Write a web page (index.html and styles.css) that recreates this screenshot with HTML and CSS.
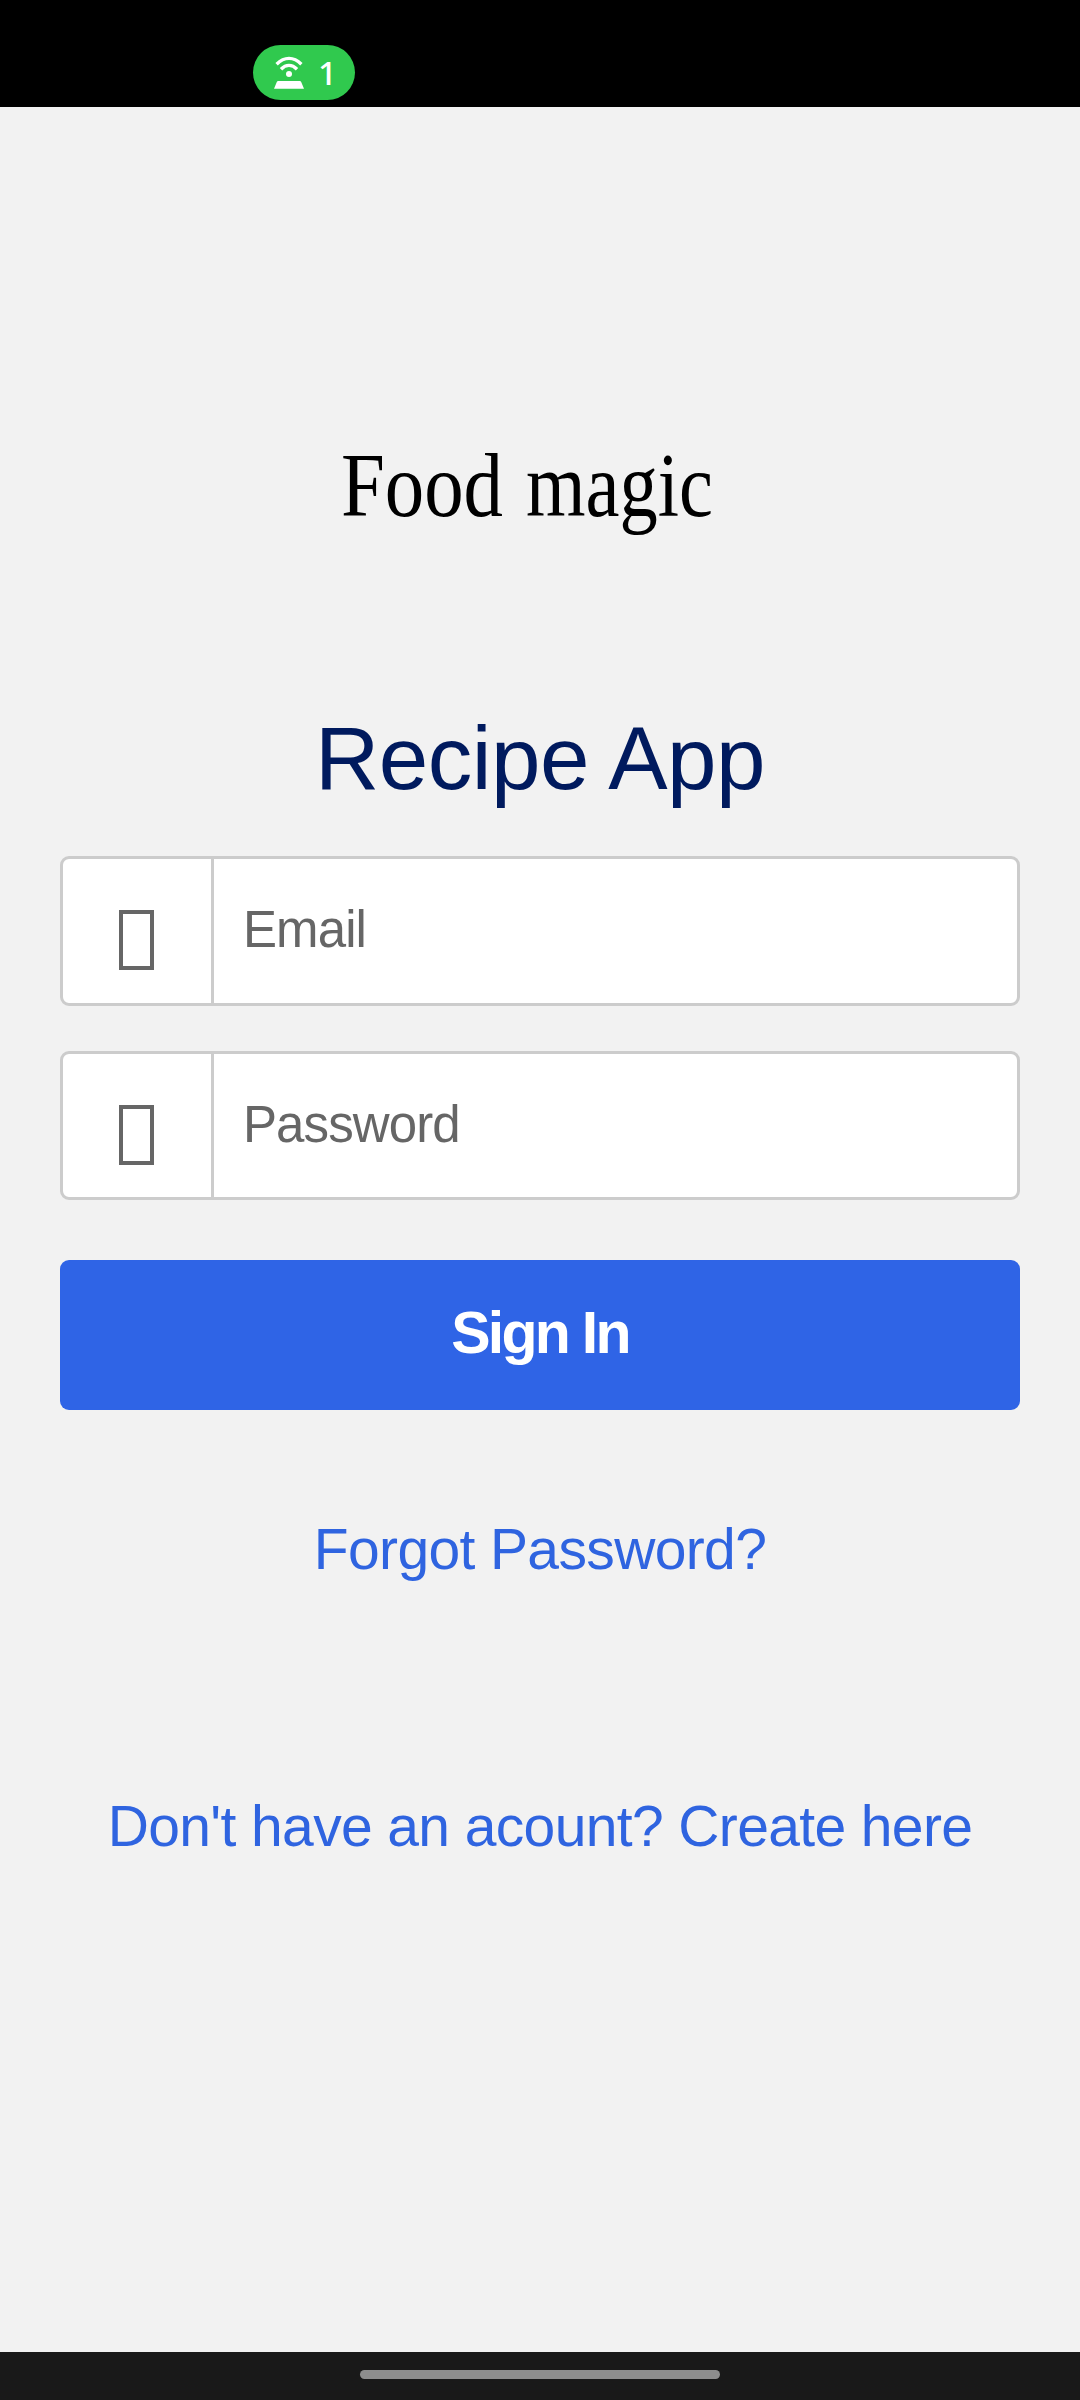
FILE: index.html
```html
<!DOCTYPE html>
<html lang="en">
<head>
<meta charset="utf-8">
<title>Recipe App</title>
<link rel="stylesheet" href="styles.css">
</head>
<body>
<header class="status-bar">
  <div class="pill">
    <svg class="hotspot" width="30" height="33" viewBox="0 0 30 33" fill="none" stroke="#fff" stroke-width="3.4">
      <path d="M2.6 8.2Q8.5 2.4 15 2.4T27.4 8.2"/>
      <path d="M7 13.2Q10.7 9.4 15 9.4T23 13.2"/>
      <circle cx="15" cy="18" r="3" fill="#fff" stroke="none"/>
      <path d="M4.2 25H25.8Q26.8 25 27.2 26L30 32.7H0L2.8 26Q3.2 25 4.2 25Z" fill="#fff" stroke="none"/>
    </svg>
    <span class="count">1</span>
  </div>
</header>
<main class="screen">
  <svg class="logo" width="400" height="140" viewBox="0 0 400 140" role="img" aria-label="Food magic">
    <text x="11" y="86" textLength="162" lengthAdjust="spacingAndGlyphs">Food</text>
    <text x="196" y="86" textLength="187" lengthAdjust="spacingAndGlyphs">magic</text>
  </svg>
  <h1 class="title">Recipe App</h1>
  <form class="form">
    <label class="field"><span class="field-icon"><i class="glyph"></i></span><span class="placeholder">Email</span></label>
    <label class="field"><span class="field-icon"><i class="glyph"></i></span><span class="placeholder">Password</span></label>
    <button class="submit" type="button">Sign In</button>
  </form>
  <a class="link forgot">Forgot Password?</a>
  <a class="link create">Don't have an acount? Create here</a>
</main>
<footer class="nav-bar"><div class="handle"></div></footer>
</body>
</html>
```
FILE: styles.css
```css
* { box-sizing: border-box; }
body {
  margin: 0;
  height: 2400px;
  display: flex;
  flex-direction: column;
  background: #f2f2f2;
  font-family: "Liberation Sans", Arial, sans-serif;
}
.status-bar {
  height: 107px;
  padding: 45px 0 0 253px;
  background: #000;
}
.pill {
  width: 102px;
  height: 55px;
  border-radius: 28px;
  background: #30c94e;
  display: flex;
  align-items: center;
  padding-left: 21px;
  gap: 14px;
}
.count {
  color: #fff;
  font: 500 33px/55px "Noto Sans", sans-serif;
}
.screen {
  flex: 1;
  display: flex;
  flex-direction: column;
  align-items: center;
}
.logo {
  display: block;
  align-self: flex-start;
  margin: 323px 0 0 330px;
  overflow: visible;
  font-family: "Liberation Serif", serif;
  font-size: 91px;
}
.title {
  margin: 133px 0 0;
  color: #001a5e;
  font-size: 89px;
  font-weight: 400;
  line-height: 110px;
  letter-spacing: -0.5px;
  white-space: nowrap;
}
.form {
  width: 960px;
  margin-top: 43px;
  display: flex;
  flex-direction: column;
}
.field {
  height: 150px;
  margin-bottom: 45px;
  display: flex;
  border: 3px solid #ccc;
  border-radius: 9px;
  background: #fff;
}
.field + .field { height: 149px; margin-bottom: 60px; }
.field-icon {
  width: 151px;
  border-right: 3px solid #ccc;
  padding: 51px 0 0 56px;
}
.glyph {
  display: block;
  width: 35px;
  height: 60px;
  border: 4px solid #666;
}
.placeholder {
  padding-left: 29px;
  color: #666;
  font-size: 51px;
  line-height: 141px;
  letter-spacing: -0.9px;
}
.submit {
  height: 150px;
  padding: 0 0 3px;
  border: 0;
  border-radius: 9px;
  background: #2f64e6;
  color: #fff;
  font: bold 59px/147px "Liberation Sans", Arial, sans-serif;
  letter-spacing: -2.7px;
}
.link {
  color: #2f64e0;
  font-size: 57px;
  line-height: 80px;
  letter-spacing: -0.63px;
  white-space: nowrap;
}
.forgot { margin-top: 99px; }
.create { margin-top: 197px; }
.nav-bar {
  height: 48px;
  padding-top: 18px;
  background: #191919;
}
.handle {
  width: 360px;
  height: 9px;
  margin: 0 auto;
  border-radius: 5px;
  background: #8d8d8d;
}
```
